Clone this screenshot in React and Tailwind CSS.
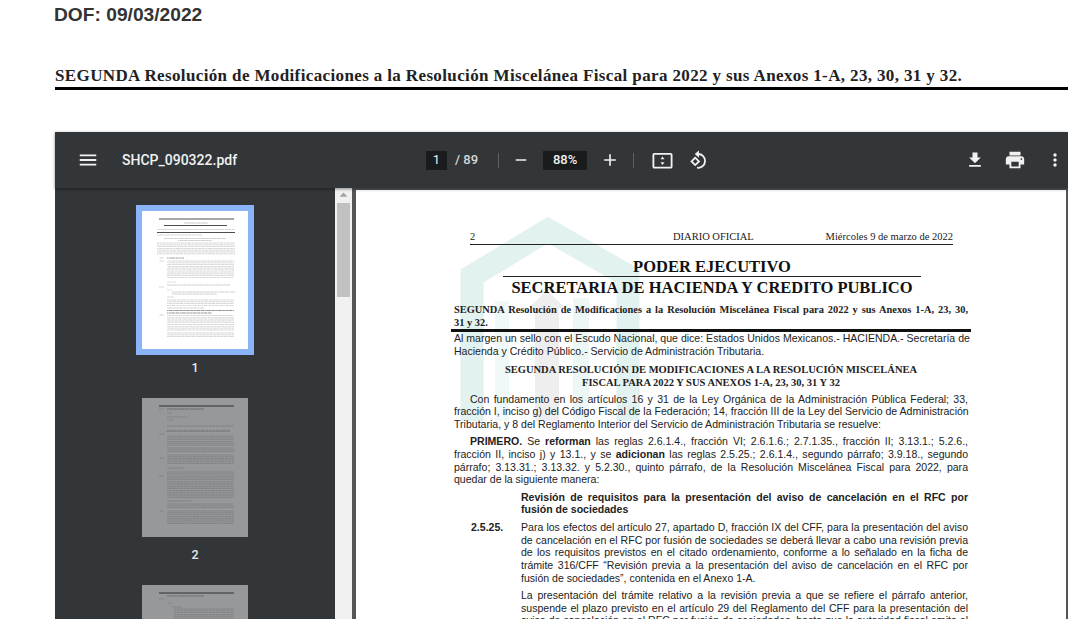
import React from 'react';

const Icon = ({ d, className = 'w-5 h-5' }) => (
  <svg viewBox="0 0 24 24" className={className} fill="currentColor">
    <path d={d} />
  </svg>
);

const ICONS = {
  menu: 'M3 18h18v-2H3v2zm0-5h18v-2H3v2zm0-7v2h18V6H3z',
  minus: 'M19 13H5v-2h14v2z',
  plus: 'M19 13h-6v6h-2v-6H5v-2h6V5h2v6h6v2z',
  download: 'M19 9h-4V3H9v6H5l7 7 7-7zM5 18v2h14v-2H5z',
  print: 'M19 8H5c-1.66 0-3 1.34-3 3v6h4v4h12v-4h4v-6c0-1.66-1.34-3-3-3zm-3 11H8v-5h8v5zm3-7c-.55 0-1-.45-1-1s.45-1 1-1 1 .45 1 1-.45 1-1 1zm-1-9H6v4h12V3z',
  more: 'M12 8c1.1 0 2-.9 2-2s-.9-2-2-2-2 .9-2 2 .9 2 2 2zm0 2c-1.1 0-2 .9-2 2s.9 2 2 2 2-.9 2-2-.9-2-2-2zm0 6c-1.1 0-2 .9-2 2s.9 2 2 2 2-.9 2-2-.9-2-2-2z',
};

// rows of a thumbnail: [y, x1, x2, stroke, opacity]
const block = (from, to, x1 = 25, x2 = 92, step = 1.8) => {
  const rows = [];
  for (let y = from; y <= to; y += step) rows.push([y, x1, x2, 0.55, 0.34]);
  return rows;
};

const page1Rows = [
  [8, 17, 92, 0.8, 1], [12, 42, 66, 0.6, 0.45], [14.5, 22, 85, 1, 0.8],
  [18.5, 15, 93, 0.55, 0.35], [21.5, 15, 93, 1.1, 0.8], [24, 15, 60, 0.55, 0.35],
  [27.5, 22, 84, 0.55, 0.4], [29.5, 36, 70, 0.55, 0.4],
  ...block(32, 44, 15, 93), [47, 25, 42, 0.7, 0.6], [47, 17, 22, 0.5, 0.4],
  ...block(50, 60), [50, 17, 22, 0.5, 0.4], ...block(61, 68), [71, 25, 34, 0.5, 0.3], [74, 25, 88, 0.55, 0.4],
  [76, 17, 22, 0.5, 0.4], [79, 25, 30, 0.5, 0.3], [81, 30, 93, 0.55, 0.4], [83, 30, 75, 0.55, 0.4], [86, 25, 32, 0.5, 0.4],
  ...block(89, 95), [97, 25, 62, 0.55, 0.4], [99.5, 25, 92, 0.8, 0.6], [102, 25, 70, 0.8, 0.6],
  [104, 17, 22, 0.5, 0.4], ...block(104.5, 119), ...block(122, 126),
];

const page2Rows = [
  [8, 17, 92, 1, 0.95], [11, 25, 62, 0.7, 0.6], [11, 17, 22, 0.5, 0.4], [15, 25, 30, 0.5, 0.3], [19, 25, 45, 0.5, 0.4],
  [22, 25, 32, 0.5, 0.4], [28, 25, 92, 0.5, 0.4], [33, 25, 88, 0.7, 0.55], [36, 17, 22, 0.5, 0.4],
  ...block(38, 47), ...block(50, 55), ...block(57, 61), [60, 17, 22, 0.5, 0.4], ...block(62, 67),
  [70, 25, 42, 0.5, 0.4], ...block(74, 76), [78, 17, 22, 0.5, 0.4], ...block(78, 100), [103, 25, 50, 0.5, 0.4],
  ...block(106, 111, 25, 92), [113, 17, 22, 0.5, 0.4], ...block(113, 126),
];

const page3Rows = [
  [8, 17, 92, 1, 0.95], [11, 25, 62, 0.7, 0.6], [14, 17, 22, 0.5, 0.4], [18, 25, 30, 0.5, 0.3], [22, 30, 40, 0.5, 0.4],
  ...block(24, 40, 32, 92),
];

const Thumb = ({ rows, dim, height = 138 }) => (
  <div className={`w-[106px] shrink-0 ${dim ? 'bg-[#96989a]' : 'bg-white'}`} style={{ height }}>
    <svg viewBox={`0 0 106 ${height}`} className="w-full h-full">
      {rows.map((r, i) => (
        <line
          key={i}
          x1={r[1]}
          x2={r[2]}
          y1={r[0]}
          y2={r[0]}
          stroke={dim ? '#2c2c2c' : '#222'}
          strokeWidth={r[3]}
          opacity={r[4]}
          strokeDasharray={r[4] < 0.7 ? '3.2 0.5 2 0.4 4.1 0.5' : undefined}
          strokeDashoffset={i * 3.7}
        />
      ))}
    </svg>
  </div>
);

function Line({ children, last, className = '' }) {
  // every printed line is kept as in the PDF, justified to the column
  return (
    <div className={`h-[12.7px] leading-[12.7px] whitespace-nowrap ${last ? '' : '[text-align-last:justify]'} ${className}`}>
      {children}
    </div>
  );
}

export default function App() {
  return (
    <div className="h-[619px] w-[1068px] overflow-hidden bg-white">
      <div className="pl-[55px]">
        <h2 className="-ml-px pt-[5px] h-[64px] text-[19.2px] leading-[20px] font-bold text-[#333] font-['Liberation_Sans',Arial,sans-serif]">
          DOF: 09/03/2022
        </h2>
        <h1 className="h-[26px] pt-[4px] text-[17px] leading-[16px] tracking-[0.37px] font-bold whitespace-nowrap text-[#222] border-b-[3px] border-black font-['Liberation_Serif','Times_New_Roman',serif]">
          SEGUNDA Resolución de Modificaciones a la Resolución Miscelánea Fiscal para 2022 y sus Anexos 1-A, 23, 30, 31 y 32.
        </h1>

        <div className="mt-[42px] h-[487px] bg-[#525659] flex flex-col font-['Roboto',sans-serif]">
          <div className="h-[56px] shrink-0 bg-[#323639] text-[#f1f1f1] flex items-center shadow-[0_1px_3px_rgba(0,0,0,0.45)] relative z-10">
            <Icon d={ICONS.menu} className="w-[22px] h-[22px] ml-[22px]" />
            <span className="ml-[23px] w-[304px] text-[14px] font-medium">SHCP_090322.pdf</span>
            <span className="w-[21px] h-[19px] bg-[#191b1c] text-[13px] flex items-center justify-center">1</span>
            <span className="ml-[8px] text-[13px] font-medium text-[#d5d6d7]">/ 89</span>
            <span className="ml-[20px] w-px h-[15px] bg-[#5f6265]" />
            <Icon d={ICONS.minus} className="w-[18px] h-[18px] ml-[13px]" />
            <span className="ml-[13px] w-[44px] h-[19px] bg-[#191b1c] text-[13px] font-medium flex items-center justify-center">88%</span>
            <Icon d={ICONS.plus} className="w-[20px] h-[20px] ml-[13px]" />
            <span className="ml-[13px] w-px h-[15px] bg-[#5f6265]" />
            <svg viewBox="0 0 24 24" className="w-[23px] h-[23px] ml-[17px]" fill="currentColor">
              <rect x="2.5" y="5" width="19" height="14.5" rx="1" fill="none" stroke="currentColor" strokeWidth="1.9" />
              <path d="M12 7.8 9.9 10.6h4.2zM12 16.7l2.1-2.8H9.9z" />
            </svg>
            <svg viewBox="0 0 24 24" className="w-[22px] h-[22px] ml-[13px]" fill="none" stroke="currentColor" strokeWidth="2">
              <path d="M12 5.5a7.5 7.5 0 1 1-1 14.9" />
              <path d="M13 1.5 8.5 5.5l4.5 4z" fill="currentColor" stroke="none" />
              <path d="M9 9.5 5 13.5l4 4 4-4z" />
            </svg>
            <Icon d={ICONS.download} className="w-[20px] h-[20px] ml-auto" />
            <Icon d={ICONS.print} className="w-[22px] h-[22px] ml-[19px]" />
            <Icon d={ICONS.more} className="w-[20px] h-[20px] ml-[19px] mr-[3px]" />
          </div>

          <div className="flex-1 flex min-h-0">
            <aside className="w-[280px] shrink-0 bg-[#323639] flex flex-col items-center pt-[17px] overflow-hidden text-[#e8eaed] text-[12.5px] font-medium">
              <div className="border-[6px] border-[#8ab4f8]">
                <Thumb rows={page1Rows} />
              </div>
              <span className="h-[43px] pt-[4px] leading-[18px] shrink-0">1</span>
              <Thumb rows={page2Rows} dim height={139} />
              <span className="h-[48px] pt-[9px] leading-[18px] shrink-0">2</span>
              <Thumb rows={page3Rows} dim />
            </aside>

            <div className="w-[17px] shrink-0 bg-[#f1f1f1] flex flex-col items-center">
              <svg viewBox="0 0 17 17" className="w-[17px] h-[15px]">
                <path d="M8.5 5 13 10H4z" fill="#a3a3a3" />
              </svg>
              <div className="w-[13px] h-[94px] bg-[#c1c1c1]" />
            </div>

            <div className="flex-1 pl-[4px] pr-[2px] pt-[2px] min-w-0">
              <main className="relative h-full bg-white overflow-hidden pt-[41px] pl-[98px] pr-[98px] text-[#222] font-['Liberation_Sans',Arial,sans-serif] text-[10.55px]">
                <svg className="absolute left-[100px] top-[26px] w-[190px] h-[240px]" viewBox="0 0 190 240" fill="none">
                  <path d="M16 205V60L92 14 172 60V205" stroke="#e2f2f0" strokeWidth="23" />
                  <path d="M125 82V205" stroke="#ecf7f6" strokeWidth="16" />
                  <path d="M46 85V205" stroke="#f0f9f8" strokeWidth="14" />
                  <path d="M79 205V92h-6L91 74l18 18h-6v113z" fill="#eeeeee" />
                </svg>

                <div className="relative">
                  <div className="ml-[16px] mr-[15px] h-[14px] border-b border-[#222] flex items-end pb-[1px] font-['Liberation_Serif',serif] text-[10.5px] leading-[12px]">
                    <span className="w-[203px]">2</span>
                    <span>DIARIO OFICIAL</span>
                    <span className="ml-auto whitespace-nowrap">Miércoles 9 de marzo de 2022</span>
                  </div>
                  <div className="mt-[13px] -mr-[2px] font-['Liberation_Serif',serif] font-bold text-center text-[16.5px] leading-[18px] text-[#111]">
                    <div className="mx-[49px] h-[19px] border-b border-[#222]">PODER EJECUTIVO</div>
                    <div className="h-[21px] leading-[21px] whitespace-nowrap">SECRETARIA DE HACIENDA Y CREDITO PUBLICO</div>
                  </div>

                  <div className="mt-[6px] font-['Liberation_Serif',serif] font-bold text-[10.4px]">
                    <Line>SEGUNDA Resolución de Modificaciones a la Resolución Miscelánea Fiscal para 2022 y sus Anexos 1-A, 23, 30,</Line>
                    <Line last>31 y 32.</Line>
                  </div>
                  <div className="-mx-[3px] h-[3px] bg-[#111]" />

                  <div>
                    <Line>Al margen un sello con el Escudo Nacional, que dice: Estados Unidos Mexicanos.- HACIENDA.- Secretaría de</Line>
                    <Line last>Hacienda y Crédito Público.- Servicio de Administración Tributaria.</Line>
                  </div>

                  <div className="mt-[5px] text-center font-['Liberation_Serif',serif] font-bold text-[10.5px] leading-[13px]">
                    <div>SEGUNDA RESOLUCIÓN DE MODIFICACIONES A LA RESOLUCIÓN MISCELÁNEA</div>
                    <div>FISCAL PARA 2022 Y SUS ANEXOS 1-A, 23, 30, 31 Y 32</div>
                  </div>

                  <div className="mt-[4px]">
                    <Line className="pl-[16px]">Con fundamento en los artículos 16 y 31 de la Ley Orgánica de la Administración Pública Federal; 33,</Line>
                    <Line>fracción I, inciso g) del Código Fiscal de la Federación; 14, fracción III de la Ley del Servicio de Administración</Line>
                    <Line last>Tributaria, y 8 del Reglamento Interior del Servicio de Administración Tributaria se resuelve:</Line>
                  </div>

                  <div className="mt-[4.5px]">
                    <Line className="pl-[16px]"><b>PRIMERO.</b> Se <b>reforman</b> las reglas 2.6.1.4., fracción VI; 2.6.1.6.; 2.7.1.35., fracción II; 3.13.1.; 5.2.6.,</Line>
                    <Line>fracción II, inciso j) y 13.1., y se <b>adicionan</b> las reglas 2.5.25.; 2.6.1.4., segundo párrafo; 3.9.18., segundo</Line>
                    <Line>párrafo; 3.13.31.; 3.13.32. y 5.2.30., quinto párrafo, de la Resolución Miscelánea Fiscal para 2022, para</Line>
                    <Line last>quedar de la siguiente manera:</Line>
                  </div>

                  <div className="mt-[4.5px] pl-[67px] font-bold">
                    <Line>Revisión de requisitos para la presentación del aviso de cancelación en el RFC por</Line>
                    <Line last>fusión de sociedades</Line>
                  </div>

                  <div className="mt-[5px] flex">
                    <b className="w-[67px] pl-[17px] shrink-0 leading-[12.7px]">2.5.25.</b>
                    <div className="flex-1 min-w-0">
                      <Line>Para los efectos del artículo 27, apartado D, fracción IX del CFF, para la presentación del aviso</Line>
                      <Line>de cancelación en el RFC por fusión de sociedades se deberá llevar a cabo una revisión previa</Line>
                      <Line>de los requisitos previstos en el citado ordenamiento, conforme a lo señalado en la ficha de</Line>
                      <Line>trámite 316/CFF “Revisión previa a la presentación del aviso de cancelación en el RFC por</Line>
                      <Line last>fusión de sociedades”, contenida en el Anexo 1-A.</Line>
                      <div className="h-[4.5px]" />
                      <Line>La presentación del trámite relativo a la revisión previa a que se refiere el párrafo anterior,</Line>
                      <Line>suspende el plazo previsto en el artículo 29 del Reglamento del CFF para la presentación del</Line>
                      <Line>aviso de cancelación en el RFC por fusión de sociedades, hasta que la autoridad fiscal emita el</Line>
                    </div>
                  </div>
                </div>
              </main>
            </div>
          </div>
        </div>
      </div>
    </div>
  );
}
